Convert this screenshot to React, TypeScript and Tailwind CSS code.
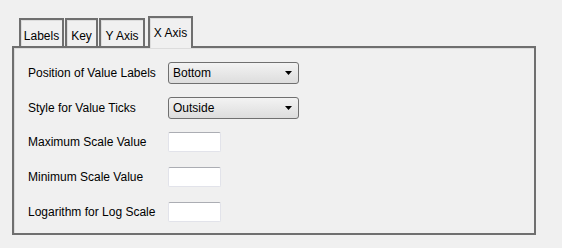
import React from "react";

const font = { fontFamily: '"Liberation Sans", Arial, sans-serif' };

function Tab({ label, w, selected }: { label: string; w: string; selected?: boolean }) {
  if (selected) {
    return (
      <div className={`relative z-10 -mb-[2px] h-[32px] ${w} border-2 border-b-0 border-[#6f6f6f] bg-[#f0f0f0] pt-[6px] text-center text-[12px] text-black shadow-[inset_1px_1px_0_#dcdcdc]`}>
        {label}
      </div>
    );
  }
  return (
    <div className={`h-[28px] ${w} border-2 border-b-0 border-[#6f6f6f] bg-[#f0f0f0] pt-[7px] text-center text-[12px] text-black shadow-[inset_1px_1px_0_#dcdcdc]`}>
      {label}
    </div>
  );
}

function Select({ value }: { value: string }) {
  return (
    <div className="flex h-[22px] w-[131px] items-center justify-between rounded-[3px] border border-[#707070] bg-gradient-to-b from-[#f3f3f3] to-[#dddddd] pl-[4px] pr-[6px] text-[12px] text-black">
      <span>{value}</span>
      <svg width="7" height="4" viewBox="0 0 7 4">
        <path d="M0 0 H7 L3.5 4 Z" fill="#000" />
      </svg>
    </div>
  );
}

function Input() {
  return (
    <div className="h-[20px] w-[53px] rounded-[2px] border border-[#e2e3ea] border-t-[#abadb3] bg-white" />
  );
}

export default function App() {
  return (
    <div className="h-[248px] w-[562px] bg-[#f0f0f0] pl-[12px] pt-[16px]" style={font}>
      <div className="flex items-end gap-[1px] pl-[7px]">
        <Tab label="Labels" w="w-[45px]" />
        <Tab label="Key" w="w-[33px]" />
        <Tab label="Y Axis" w="w-[46px]" />
        <div className="w-[1px]" />
        <Tab label="X Axis" w="w-[45px]" selected />
      </div>
      <div className="h-[189px] w-[524px] border-2 border-[#6f6f6f] pl-[14px] pt-[14px] text-[12px] text-black shadow-[inset_1px_1px_0_#dcdcdc]">
        <div className="flex h-[22px] items-center">
          <span className="w-[140px]">Position of Value Labels</span>
          <Select value="Bottom" />
        </div>
        <div className="mt-[13px] flex h-[22px] items-center">
          <span className="w-[140px]">Style for Value Ticks</span>
          <Select value="Outside" />
        </div>
        <div className="mt-[13px] flex h-[20px] items-center">
          <span className="w-[140px]">Maximum Scale Value</span>
          <Input />
        </div>
        <div className="mt-[15px] flex h-[20px] items-center">
          <span className="w-[140px]">Minimum Scale Value</span>
          <Input />
        </div>
        <div className="mt-[15px] flex h-[20px] items-center">
          <span className="w-[140px]">Logarithm for Log Scale</span>
          <Input />
        </div>
      </div>
    </div>
  );
}
